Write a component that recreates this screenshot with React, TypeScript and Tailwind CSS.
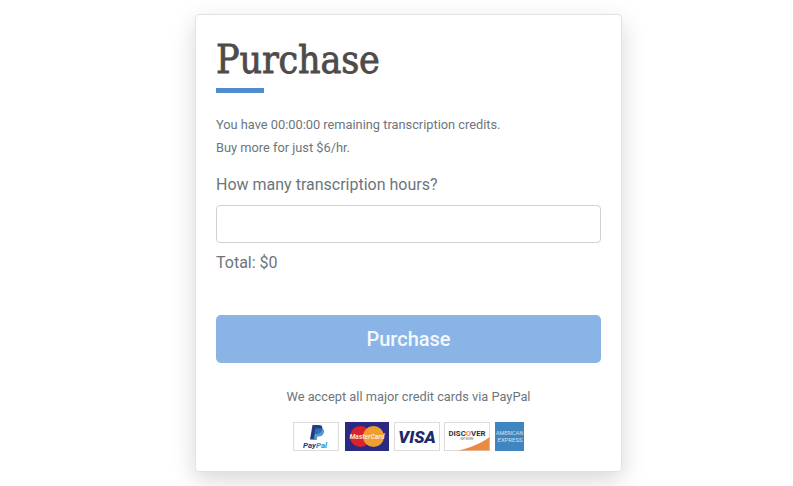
const font = { fontFamily: "Roboto, sans-serif" };

function PayPal() {
  return (
    <svg width="46" height="30" viewBox="0 0 46 30" className="shrink-0">
      <rect x="0.5" y="0.5" width="45" height="28" fill="#fff" stroke="#dcdcdc" />
      <path d="M19.5 3h6c3 0 4.4 1.6 3.9 4.2-.6 3.2-2.8 4.8-5.8 4.8h-1.6l-.9 5.5H17z" fill="#253b80" />
      <path d="M22.5 6.5h5.3c2.6 0 3.7 1.5 3.2 3.8-.6 2.8-2.6 4.2-5.2 4.2h-1.4l-.7 3.5h-3.4z" fill="#2f7fc5" opacity="0.8" />
      <text x="10" y="26" fontSize="8" fontWeight="700" fontStyle="italic" fontFamily="Roboto, sans-serif" fill="#253b80">Pay<tspan fill="#2f8fd0">Pal</tspan></text>
    </svg>
  );
}

function MasterCard() {
  return (
    <svg width="44" height="30" viewBox="0 0 44 30" className="shrink-0">
      <rect width="44" height="29" fill="#2b2a82" />
      <circle cx="15.5" cy="14.5" r="10.5" fill="#d9222a" />
      <circle cx="28.5" cy="14.5" r="10.5" fill="#ee9f2d" />
      <text x="22" y="17" textAnchor="middle" fontSize="6.8" fontWeight="700" fontStyle="italic" fontFamily="Roboto, sans-serif" fill="#fbe6dc">MasterCard</text>
    </svg>
  );
}

function Visa() {
  return (
    <svg width="46" height="30" viewBox="0 0 46 30" className="shrink-0">
      <rect x="0.5" y="0.5" width="45" height="28" fill="#fff" stroke="#dcdcdc" />
      <text x="23" y="21" textAnchor="middle" fontSize="17" fontWeight="900" fontStyle="italic" fontFamily="Roboto, sans-serif" fill="#1c2a6b">VISA</text>
    </svg>
  );
}

function Discover() {
  return (
    <svg width="46" height="30" viewBox="0 0 46 30" className="shrink-0">
      <rect x="0.5" y="0.5" width="45" height="28" fill="#fff" stroke="#dcdcdc" />
      <path d="M14 28.5C26 26 38 21 45.5 15v13.5z" fill="#e98b42" />
      <text x="23" y="13.5" textAnchor="middle" fontSize="7.8" fontWeight="700" fontFamily="Roboto, sans-serif" fill="#333">DISC<tspan fill="#e98b42">O</tspan>VER</text>
      <text x="23" y="18" textAnchor="middle" fontSize="2.8" fontFamily="Roboto, sans-serif" fill="#666">NETWORK</text>
    </svg>
  );
}

function Amex() {
  return (
    <svg width="29" height="30" viewBox="0 0 29 30" className="shrink-0">
      <rect width="29" height="29" fill="#3f85c0" />
      <text x="14.5" y="13" textAnchor="middle" fontSize="5.2" textLength="27" lengthAdjust="spacingAndGlyphs" fontFamily="Roboto, sans-serif" fill="#cfe2f1">AMERICAN</text>
      <text x="15" y="20" textAnchor="middle" fontSize="5.2" textLength="25" lengthAdjust="spacingAndGlyphs" fontFamily="Roboto, sans-serif" fill="#cfe2f1">EXPRESS</text>
    </svg>
  );
}

export default function App() {
  return (
    <div className="h-[486px] overflow-hidden bg-white pt-[14px]" style={font}>
      <div className="ml-[195px] h-[458px] w-[427px] rounded-[4px] border border-[#e2e2e2] bg-white px-5 shadow-[0_8px_24px_rgba(0,0,0,0.16)]">
        <h1 className="mt-[20px] text-[39px] leading-[50px] tracking-[-0.15px] text-[#4f4b4b] [-webkit-text-stroke:0.8px_#4f4b4b]" style={{ fontFamily: "'DejaVu Serif Condensed', 'DejaVu Serif', serif", fontStretch: "condensed" }}>
          Purchase
        </h1>
        <div className="mt-[3px] h-[5px] w-12 bg-[#4f8cd0]" />
        <p className="mt-[20px] text-[12.8px] leading-[23px] text-[#6c757d]">
          You have 00:00:00 remaining transcription credits.
          <br />
          Buy more for just $6/hr.
        </p>
        <label className="mt-[14px] block text-base leading-6 text-[#6c757d]">How many transcription hours?</label>
        <input className="mt-[8px] block h-[38px] w-[385px] rounded-[4px] border border-[#d0d0d0] bg-white" />
        <p className="mt-[8px] text-base leading-6 text-[#6c757d]">Total: $0</p>
        <button className="mt-[40px] block h-[48px] w-[385px] rounded-[5px] bg-[#8ab4e6] text-xl font-medium text-[#f3f8fd]">
          Purchase
        </button>
        <p className="mt-[24px] text-center text-[12.8px] leading-[20px] text-[#6c757d]">
          We accept all major credit cards via PayPal
        </p>
        <div className="mt-[15px] flex justify-center">
          <PayPal />
          <div className="ml-[6px]"><MasterCard /></div>
          <div className="ml-[5px]"><Visa /></div>
          <div className="ml-[4px]"><Discover /></div>
          <div className="ml-[5px]"><Amex /></div>
        </div>
      </div>
    </div>
  );
}
